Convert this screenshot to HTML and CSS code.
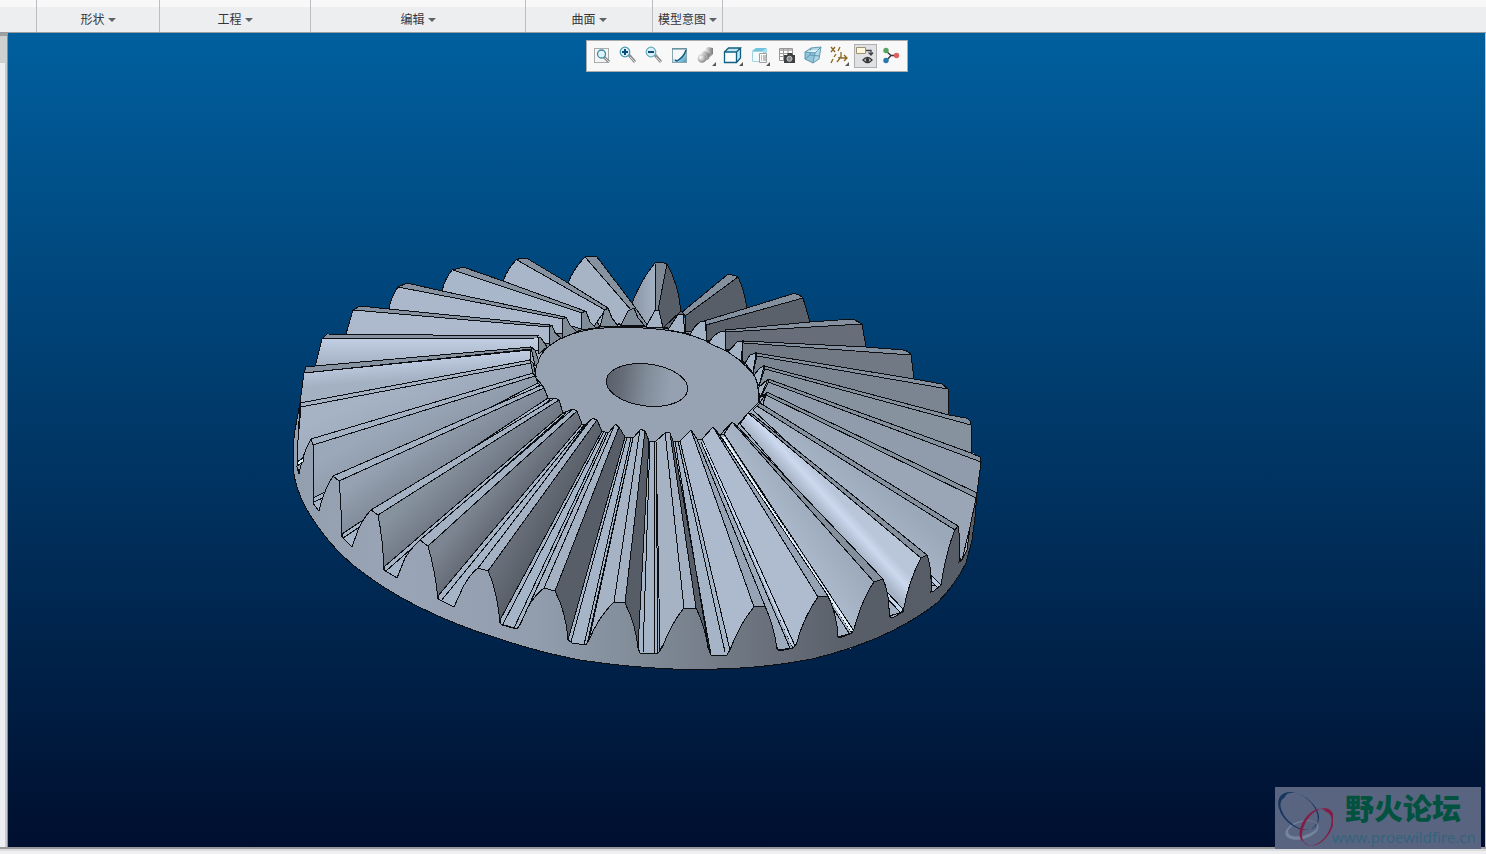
FILE: index.html
```html
<!DOCTYPE html>
<html lang="zh-CN">
<head>
<meta charset="utf-8">
<title>模型</title>
<link rel="stylesheet" href="styles.css">
</head>
<body>
<div class="app">
  <nav class="ribbon" aria-label="功能区">
    <div class="group group-start"></div>
    <div class="group group-shape"><button type="button">形状<i class="caret"></i></button></div>
    <div class="group group-eng"><button type="button">工程<i class="caret"></i></button></div>
    <div class="group group-edit"><button type="button">编辑<i class="caret"></i></button></div>
    <div class="group group-surface"><button type="button">曲面<i class="caret"></i></button></div>
    <div class="group group-intent"><button type="button">模型意图<i class="caret"></i></button></div>
  </nav>
  <div class="workspace">
    <aside class="tree"><div class="tree-head"></div><div class="tree-body"></div></aside>
    <main class="viewport">
      <div class="toolbar" role="toolbar">
        <button type="button" class="tool" aria-label="重新调整"><svg viewBox="0 0 24 24"><rect x="4.500" y="4.500" width="14" height="14" fill="#f4f6f6" stroke="#a9acac"/><path d="M14 13l5 5" stroke="#8c9093" stroke-width="3"/><path d="M15 14l4 4" stroke="#d8d8d8"/><circle cx="11.500" cy="10" r="4" fill="#dff3fb" stroke="#3c8aa6" stroke-width="1.300"/></svg></button>
        <button type="button" class="tool" aria-label="放大"><svg viewBox="0 0 24 24"><path d="M13 11l6 7" stroke="#8c9093" stroke-width="3"/><path d="M14 13l5 5" stroke="#d8d8d8"/><circle cx="9" cy="8" r="4.800" fill="#d8f0fa" stroke="#4b96b2" stroke-width="1.200"/><path d="M6 8h6M9 5v6" stroke="#064a78" stroke-width="2"/></svg></button>
        <button type="button" class="tool" aria-label="缩小"><svg viewBox="0 0 24 24"><path d="M13 11l6 7" stroke="#8c9093" stroke-width="3"/><path d="M14 13l5 5" stroke="#d8d8d8"/><circle cx="9" cy="8" r="4.800" fill="#d8f0fa" stroke="#6aa8be" stroke-width="1.200"/><path d="M6 8h6" stroke="#064a78" stroke-width="2"/></svg></button>
        <button type="button" class="tool" aria-label="重画"><svg viewBox="0 0 24 24"><defs><linearGradient id="rp" x1="0" y1="0" x2="1" y2="1"><stop offset=".3" stop-color="#e9f7fb"/><stop offset="1" stop-color="#3c9ac0"/></linearGradient></defs><rect x="4.500" y="4.500" width="14" height="14" fill="url(#rp)" stroke="#8ba6b0"/><path d="M5 5h13Q15 13 8 17L5 13z" fill="#f5f8f9"/><path d="M18 6Q16 13 9 17l-2-1" fill="none" stroke="#0b5a80" stroke-width="1.400"/><path d="M4 5h15" stroke="#4d7f93"/></svg></button>
        <button type="button" class="tool drop" aria-label="显示样式"><svg viewBox="0 0 24 24"><defs><radialGradient id="sp" cx=".35" cy=".35" r=".7"><stop stop-color="#fff"/><stop offset="1" stop-color="#858585"/></radialGradient><linearGradient id="cy"><stop stop-color="#f4f4f4"/><stop offset="1" stop-color="#777"/></linearGradient></defs><path d="M11 5l3-2 5 1v6l-3 3-5-2z" fill="url(#cy)"/><path d="M7 8l4-1 5 3-1 5-4 2-4-4z" fill="url(#cy)"/><circle cx="8" cy="14.500" r="4.300" fill="url(#sp)"/><path class="mark" d="M22 18v4h-4z"/></svg></button>
        <button type="button" class="tool drop" aria-label="已保存方向"><svg viewBox="0 0 24 24"><path d="M3.500 8l4-4h12v10l-4 4.500h-12z" fill="#bfe5ef"/><path d="M3.500 8h12v10.500h-12z" fill="#f8fcfd"/><path d="M3.500 8h12v10.500h-12zM3.500 8l4-4h12l-4 4M19.500 4v10l-4 4.500" fill="none" stroke="#116080" stroke-width="1.300"/><path class="mark" d="M22 18v4h-4z"/></svg></button>
        <button type="button" class="tool drop" aria-label="视图管理器"><svg viewBox="0 0 24 24"><path d="M4 7l4-3h11l-4 3z" fill="#70c3dd"/><path d="M15 7l4-3v10h-4z" fill="#a9dbe9"/><path d="M4.500 7.500h11v10h-11z" fill="#f3fbfd" stroke="#a4d4e3"/><path d="M11.500 9.500h7v9h-7z" fill="#fafafa" stroke="#a0a0a0"/><path d="M13 12h1m1 0h3m-5 2h1m1 0h3m-5 2h1m1 0h3" stroke="#888"/><path class="mark" d="M22 18v4h-4z"/></svg></button>
        <button type="button" class="tool" aria-label="捕获视图"><svg viewBox="0 0 24 24"><path d="M4.500 4.500h13v12h-13z" fill="#fff" stroke="#999"/><path d="M5 5h12v2H5z" fill="#bbb"/><path d="M5 9.500h12M5 12.500h12M8.500 5v12M13 5v5" stroke="#999"/><path d="M9 11h3l1-2h4l1 2h2v8H9z" fill="#3c4042"/><circle cx="14.500" cy="14.800" r="2.500" fill="#858b8e" stroke="#ccc"/></svg></button>
        <button type="button" class="tool" aria-label="透视图"><svg viewBox="0 0 24 24"><path d="M4 8l6-4 10-1-2 12-6 4-8-4z" fill="#b3d9e7"/><path d="M4 8l10 1-2 10-8-4z" fill="#92c5da"/><path d="M4 8l6-4 10-1-6 6zM14 9l6-6-2 12-6 4zM4 8v7l5-4 9 1M10 4L9 11M4 15l8 4" fill="none" stroke="#5f9ab3"/><path d="M6 8l5-2h6l-3 2z" fill="#e2f3f8"/></svg></button>
        <button type="button" class="tool drop" aria-label="基准显示"><svg viewBox="0 0 24 24"><g fill="none" stroke="#8b6720" stroke-width="1.300"><path d="M4 3l4 5M8 3L4 8M13 3l-2 4M9 10l-2 3M6 15l-2 4M14 8v5l-4 5M14 14h6M17 11l3 3-3 3M14 13l-3 1"/></g><path class="mark" d="M22 18v4h-4z"/></svg></button>
        <button type="button" class="tool pressed" aria-pressed="true" aria-label="注释显示"><svg viewBox="0 0 24 24"><path d="M3.500 3.500h9v6h-9z" fill="#fff8df" stroke="#9e9271"/><path d="M13 6.500h5V11M15.500 8.500L18 11l2-2.500" fill="none" stroke="#414447" stroke-width="1.300"/><path d="M10 16q4.500-5 9 0-4.500 5-9 0z" fill="#fff" stroke="#333" stroke-width="1.300"/><circle cx="14.500" cy="16" r="2" fill="#333"/></svg></button>
        <button type="button" class="tool" aria-label="旋转中心"><svg viewBox="0 0 24 24"><path d="M7 7l5 4.500L7 17M12 11.500h6" fill="none" stroke="#333" stroke-width="1.300"/><circle cx="7" cy="6.500" r="2.700" fill="#57a461"/><circle cx="17.500" cy="11.500" r="2.700" fill="#db6263"/><circle cx="7" cy="16.500" r="2.700" fill="#2679a8"/></svg></button>
      </div>

      <svg class="gear" viewBox="280 240 720 440" role="img" aria-label="锥齿轮">
        <defs>
          <linearGradient id="bore"><stop stop-color="#5a606a"/><stop offset=".2" stop-color="#666d78"/><stop offset=".5" stop-color="#838e9b"/><stop offset=".8" stop-color="#95a1b1"/></linearGradient>
          <linearGradient id="rim" gradientUnits="userSpaceOnUse" x1="293" y1="0" x2="980" y2="0"><stop stop-color="#939fae"/><stop offset=".15" stop-color="#99a5b6"/><stop offset=".35" stop-color="#929eae"/><stop offset=".55" stop-color="#7c8692"/><stop offset=".7" stop-color="#686f7a"/><stop offset=".82" stop-color="#585e68"/><stop offset="1" stop-color="#575d66"/></linearGradient>
          <linearGradient id="l6" x1="0" y1="0" x2="0" y2="1"><stop stop-color="#c4d0e5"/><stop offset="1" stop-color="#a2afc1"/></linearGradient>
          <linearGradient id="l7" x1="0" y1="0" x2=".3" y2="1"><stop offset=".2" stop-color="#c6d3ea"/><stop offset=".65" stop-color="#a4b1c3"/></linearGradient>
          <linearGradient id="l8" x1="0" y1="0" x2="1" y2="1"><stop offset=".3" stop-color="#a6b3c5"/><stop offset=".7" stop-color="#94a0b0"/></linearGradient>
          <linearGradient id="l9" x1="0" y1="0" x2="1" y2="1"><stop offset=".35" stop-color="#9ba8b9"/><stop offset=".7" stop-color="#818c99"/></linearGradient>
          <linearGradient id="l10" x1="0" y1="0" x2="1" y2="1"><stop offset=".35" stop-color="#96a2b2"/><stop offset=".65" stop-color="#6e7682"/></linearGradient>
          <linearGradient id="l11" x1="0" y1="0" x2="1" y2="1"><stop offset=".38" stop-color="#87929f"/><stop offset=".6" stop-color="#646b76"/></linearGradient>
          <linearGradient id="l12" x1="0" y1="0" x2="1" y2="1"><stop offset=".4" stop-color="#7c8591"/><stop offset=".58" stop-color="#5c626c"/></linearGradient>
          <linearGradient id="l13" x1="0" y1="0" x2="1" y2="1"><stop offset=".4" stop-color="#686f7a"/><stop offset=".56" stop-color="#575d66"/></linearGradient>
          <linearGradient id="r20" x1="1" y1="0" x2="0" y2="1"><stop offset=".44" stop-color="#b9c6da"/><stop offset=".475" stop-color="#cbd8ee"/><stop offset=".53" stop-color="#a6b3c5"/></linearGradient>
          <linearGradient id="r19" x1="1" y1="0" x2="0" y2="1"><stop offset=".4" stop-color="#9daabb"/><stop offset=".6" stop-color="#afbccf"/></linearGradient>
          <linearGradient id="r21" x1="1" y1="0" x2="0" y2="1"><stop offset=".4" stop-color="#9ba8b9"/><stop offset=".6" stop-color="#adbacd"/></linearGradient>
          <linearGradient id="a0"><stop stop-color="#8995a4"/><stop offset="1" stop-color="#a5b2c4"/></linearGradient>
        </defs>

        <path d="M300 403L304 373L530 340L760 340L981 457L977 493L970 550L936 603L850 649L673 667L540 649L417 604L332 542L302 497L295 470V446Z" fill="#a2afc1" stroke="none"/>
        <path d="M540 350L563 320L585 313L608 311L634 310L657 311L682 317L705 324L743 344V365H545Z" fill="#7d8894" stroke="none"/>

        <g class="back-teeth">
          <path d="M632 303Q642 278 655 263L656 310L646 326Z" fill="url(#a0)"/>
          <path d="M667 264Q679 285 681 313L663 328L658 310Z" fill="#585e68"/>
          <path d="M655 263Q661 261 667 264L658 310H656Z" fill="#7e8894"/>
        </g>

        <g class="left-back">
          <path d="M568 283Q574 268 585 257L646 326H600Z" fill="#a7b4c6"/>
          <path class="land-d" d="M585 257Q591 255 597 257L632 303L648 326H645Z"/>
          <path d="M503 281Q508 268 517 259L606 309L592 329Z" fill="#a9b6c9"/>
          <path class="land-d" d="M517 260L520 258L528 259L568 283L608 308L605 310Z"/>
          <path d="M442 291Q445 278 453 269L582 312V329Z" fill="#a9b7ca"/>
          <path class="land-d" d="M453 270L463 267L503 281L585 311L582 313Z"/>
          <path d="M389 309Q391 297 398 287L563 319V334Z" fill="#abb8cb"/>
          <path class="land-d" d="M398 287L407 283L442 291L565 317L563 319Z"/>
          <path d="M346 334L353 310L549 327V344Z" fill="#adbacd"/>
          <path class="land-d" d="M353 310L360 306L389 309L550 325L549 327Z"/>
          <path d="M315 367L322 339L538 337L540 350Z" fill="url(#l6)"/>
          <path class="land-d" d="M322 339L327 334L538 336L537 338Z"/>
          <path d="M300 403L304 373L530 350L531 362Z" fill="url(#l7)"/>
          <path class="land-d" d="M304 373L306 367L315 366L531 347L532 349Z"/>
        </g>

        <g class="right-back">
          <path d="M738 277Q744 289 747 308L700 330L685 332V315Z" fill="#585e68"/>
          <path class="land-r" d="M681 313L727 275Q733 274 738 277L685 316Z"/>
          <path d="M663 328L681 311L685 315L670 329Z" fill="#626974"/>
          <path d="M803 298L810 322L750 340L707 341L706 324Z" fill="#5b616b"/>
          <path class="land-r" d="M704 321L747 308L792 294Q798 293 803 298L706 325Z"/>
          <path d="M862 324L866 347L743 348L726 350L725 331Z" fill="#676e79"/>
          <path class="land-r" d="M725 330L810 322L853 319L862 324L726 332Z"/>
          <path d="M911 355L914 379L756 372L742 361L743 342Z" fill="#717985"/>
          <path class="land-r" d="M743 341L866 347L903 350Q909 351 911 355L744 343Z"/>
          <path d="M948 389L949 415L764 385L753 373L757 355Z" fill="#7b8591"/>
          <path class="land-r" d="M756 353L914 379L942 384L948 389L757 356Z"/>
          <path d="M971 425V453L768 395L759 386L765 368Z" fill="#87929f"/>
          <path class="land-r" d="M764 366L949 415L966 418Q971 420 971 425L765 369Z"/>
          <path d="M981 462L977 493L766 405L761 397L769 381Z" fill="#909cab"/>
          <path class="land-r" d="M768 379L971 453L980 457L981 462L768 382Z"/>
          <path d="M976 498L970 527L962 560L760 415L766 394Z" fill="#9aa6b6"/>
          <path class="land-r" d="M767 392L977 493L976 498L766 395Z"/>
          <path d="M955 530L941 585L753 410L758 405Z" fill="url(#r21)"/>
          <path class="land-r" d="M760 403L958 526L955 530L757 406Z"/>
        </g>

        <g class="front-right">
          <path d="M931 585L941 585L937 592L931 592Z" fill="#a3b1c3"/>
          <path d="M931 575L941 585L938 588L931 581Z" fill="#bccbe0"/>
          <path d="M903 612L740 424L748 413L921 558Z" fill="url(#r20)"/>
          <path class="land-r" d="M751 413L927 555L921 558L748 413Z"/>
          <path d="M889 616L885 590L903 612Z" fill="#a3b1c3"/>
          <path d="M885 590L903 609L901 613L885 596Z" fill="#c6d6ec"/>
          <path d="M854 631L724 434L732 422L874 582Z" fill="url(#r19)"/>
          <path class="land-r" d="M734 423L883 579L874 582L732 422Z"/>
          <path d="M838 637L720 435L724 434L852 633Z" fill="#a3b1c3"/>
          <path class="glint" d="M723 437L852 631"/>
          <path d="M722 438L849 633"/>
          <path d="M795 646L702 439L713 427L818 597Z" fill="#afbcd0"/>
          <path class="land-m" d="M716 430L828 596L818 597L713 427Z"/>
          <path d="M765 606L694 432L697 439L778 650Z" fill="#8b96a5"/>
          <path d="M778 650L697 439L702 439L793 648Z" fill="#9dabbc"/>
          <path class="glint soft" d="M702 442L793 646"/>
          <path d="M701 442L790 648"/>
          <path d="M730 650L680 441L691 430L754 607Z" fill="#adbacd"/>
          <path class="land-m" d="M694 432L765 606L754 607L691 430Z"/>
        </g>

        <g class="front-left">
          <path class="land" d="M300 403L530 360L531 363L301 407Z"/>
          <path d="M301 407L531 363L535 374L313 450L300 474L297 467L298 440Z" fill="url(#l8)"/>
          <path class="land" d="M311 439L533 373L535 376L313 445Z"/>
          <path d="M313 445L535 376L538 383L313 503Z" fill="url(#l9)"/>
          <path class="floor" d="M313 498L538 383L540 385L319 511L313 503Z"/>
          <path d="M314 502L325 497"/>
          <path class="land" d="M333 476L542 385L544 388L339 481Z"/>
          <path d="M339 481L544 388L548 398L342 537Z" fill="url(#l10)"/>
          <path class="floor" d="M342 534L548 398L550 400L352 547L342 537Z"/>
          <path d="M343 538L364 524"/>
          <path class="land" d="M371 510L555 398L559 400L378 515Z"/>
          <path d="M378 515L559 400L563 413L384 570Z" fill="url(#l11)"/>
          <path class="floor" d="M384 567L563 413L566 413L397 578L384 570Z"/>
          <path d="M386 571L566 413"/>
          <path class="land" d="M420 540L573 409L577 411L428 546Z"/>
          <path d="M428 546L577 411L582 424L438 599Z" fill="url(#l12)"/>
          <path class="floor" d="M438 596L582 424H586L454 607L438 599Z"/>
          <path d="M441 601L585 424"/>
          <path class="land" d="M478 568L592 418L597 420L488 571Z"/>
          <path d="M488 571L597 420L602 431L500 623Z" fill="url(#l13)"/>
          <path class="floor" d="M500 620L602 431L608 433L518 629L501 624Z"/>
          <path d="M503 624L604 431M514 628L606 433"/>
          <path class="side" d="M520 625L608 433L616 424L544 588Z"/>
          <path class="land" d="M544 588L615 424L619 427L555 591Z"/>
          <path d="M555 591L619 427L625 437L568 640Z" fill="#585e68"/>
          <path class="floor" d="M568 640L625 437L633 438L587 645L571 643Z"/>
          <path d="M571 642L627 437M584 645L631 438"/>
          <path class="side" d="M589 640L633 438L641 429L614 602Z"/>
          <path class="land" d="M614 602L640 429L645 431L625 603Z"/>
          <path d="M625 603L645 431L649 440L638 648Z" fill="#575d67"/>
          <path class="floor" d="M638 648L649 440H656L658 653H640Z"/>
          <path d="M643 653L650 440M655 653L654 440"/>
          <path class="side" d="M660 650L656 441L666 432L684 608Z"/>
          <path class="land" d="M684 608L665 432L670 433L696 608Z"/>
          <path d="M696 608L670 433L673 441L711 655Z" fill="#575d67"/>
          <path class="floor" d="M711 655L673 441H680L730 650L727 655Z"/>
          <path d="M709 651L675 441M725 652L678 441"/>
        </g>

        <path class="rim" fill="url(#rim)" d="M300 403L298 440L297 467L299 474L302 460Q305 450 311 439L313 445V503L319 511L321 503Q326 487 333 476L339 481Q341 500 342 537L352 547L358 530Q364 517 371 510L378 515Q383 540 384 570L397 578L405 558Q413 546 420 540L428 546Q435 570 438 599L454 607L463 587Q471 573 478 568L488 571Q497 590 500 623L502 625L517 629L520 625L528 607Q535 595 544 588L555 591Q566 612 568 640L572 643L586 645L589 640Q599 616 614 602L625 603Q636 625 638 648L640 653L658 653L662 648Q672 622 684 608H696Q705 626 708 648L711 655H727L730 650Q740 623 754 607L765 606Q774 626 777 649L780 651L793 648L796 645Q804 616 818 597L828 596Q837 615 838 637H842L852 633L854 629Q863 597 874 582L883 579Q890 595 889 616L892 618L903 612Q909 580 921 558L927 555Q932 567 931 592L934 591L941 585Q947 548 955 530L958 526Q961 541 959 562L962 560L967 550L970 527L976 498L977 493L975 517L972 540L966 563Q955 585 937 603Q913 622 877 638Q845 651 812 659Q776 666 740 668Q707 670 673 669Q626 667 580 660Q538 652 500 639Q457 626 417 606Q383 589 353 565Q330 546 312 518Q296 494 293 468V447L295 430Z"/>
        <path d="M297 462L303 458V462L297 466Z" fill="#dff3fa"/>

        <path class="hub" d="M536 378Q533 360 550 345Q567 333 593 329Q617 326 643 328Q665 329 687 334Q710 341 730 353Q748 366 755 377Q760 390 758 403L753 408L748 413L742 420L737 426L732 422L720 435L713 427L702 439H697L691 430L680 441H673L670 433L666 432L656 441H649L645 431L641 429L633 438L625 437L619 427L616 424L608 433L602 431L597 420L593 418L586 424H582L577 411L573 409L563 413L559 400L555 398L548 398L544 388L542 385Z"/>
        <g class="faces-left">
          <path d="M621 325L628 311L634 308L638 318L645 326Z"/>
          <path d="M600 327L604 311L608 308L612 318L618 326Z"/>
          <path d="M581 330L582 313L586 311L590 322L596 328Z"/>
          <path d="M562 338L563 319L566 317L570 325L577 332Z"/>
          <path d="M549 346V327L552 325L555 333L561 338Z"/>
          <path d="M539 354L538 337L541 338L547 347Z"/>
          <path d="M531 347L535 350L539 362L535 366Z"/>
          <path d="M530 360L533 363L536 376L533 373Z"/>
        </g>
        <g class="faces-right">
          <path d="M646 327L655 310H659L663 328Z"/>
          <path d="M668 330Q674 320 678 315L683 314L685 333Z"/>
          <path d="M690 335Q694 326 700 322L705 321L707 341Z"/>
          <path d="M709 343Q713 335 720 332L725 331L726 351Z"/>
          <path d="M728 352L737 342L743 341L741 361Z"/>
          <path d="M745 363L750 355L756 353L753 373Z"/>
          <path d="M754 375L760 368L764 366L759 386Z"/>
          <path d="M758 388L768 379L760 398Z"/>
          <path d="M759 399L767 392L759 404Z"/>
        </g>
        <path class="pits" d="M618 324L622 325M596 328L600 327M576 332L581 331M663 328H668M685 333L690 335M707 341L710 343M726 350L729 352M741 361L745 363"/>
        <ellipse cx="647" cy="385" rx="41" ry="21" transform="rotate(7 647 385)" fill="url(#bore)"/>
      </svg>

      <div class="watermark">
        <svg class="wm-logo" viewBox="0 0 58 60" aria-hidden="true">
          <g fill-rule="evenodd">
            <path transform="rotate(-15 27 43)" fill="#77849d" d="M10 43a17 9 0 1 0 34 0a17 9 0 1 0-34 0M13 42a15 7 0 1 0 30 0a15 7 0 1 0-30 0"/>
            <path transform="rotate(42 23 24)" fill="#16365f" d="M0 24a23 15 0 1 0 46 0a23 15 0 1 0-46 0M4 23a21 12 0 1 0 41 0a21 12 0 1 0-41 0"/>
            <path transform="rotate(-56 43 40)" fill="#821d46" d="M22 40a21 13 0 1 0 42 0a21 13 0 1 0-42 0M23 38a19 11 0 1 0 37 0a19 11 0 1 0-37 0"/>
          </g>
        </svg>
        <div class="wm-text"><span class="wm-name">野火论坛</span><span class="wm-url">www.proewildfire.cn</span></div>
      </div>
    </main>
    <div class="edge"></div>
  </div>
  <footer class="status"></footer>
</div>
</body>
</html>
```

FILE: styles.css
```css
* { box-sizing: border-box; }
body { margin: 0; font-family: "Liberation Sans", "Noto Sans CJK SC", sans-serif; background: #ededf0; }
button { font: inherit; border: 0; padding: 0; background: none; color: inherit; }
.app { display: flex; flex-direction: column; height: 100vh; overflow: hidden; }

.ribbon { display: flex; height: 33px; flex: none; background: linear-gradient(#f8f8f8 7px, #edeef0 7px); border-bottom: 1px solid #999b9e; }
.group { display: flex; justify-content: center; padding-top: 7px; border-right: 1px solid #babdc2; }
.group button { display: flex; align-items: center; gap: 3px; font-size: 12px; line-height: 24px; color: #34343a; white-space: nowrap; }
.caret { border: 4px solid transparent; border-top-color: #5f6266; border-bottom: 0; }
.group-start { width: 37px; }
.group-shape { width: 123px; }
.group-eng { width: 151px; }
.group-edit { width: 215px; }
.group-surface { width: 127px; }
.group-intent { width: 70px; }

.workspace { display: flex; flex: 1; min-height: 0; }
.tree { display: flex; flex-direction: column; width: 8px; flex: none; border-right: 1px solid #8c8e91; border-top: 3px solid #9d9fa1; background: #cbccce; }
.tree-head { height: 27px; background: #cdcfd1; }
.tree-body { flex: 1; margin-right: 2px; background: #eeeff2; }
.viewport { position: relative; flex: 1; min-width: 0; background: linear-gradient(#005f9e, #000f2f); }
.edge { width: 1px; background: #c5c8cc; }
.status { height: 7px; flex: none; border-top: 2px solid #99999c; background: linear-gradient(#dcdddf 2px, #efeff1 2px); }

.toolbar { position: absolute; top: 7px; left: 50%; transform: translateX(-50%); display: flex; align-items: center; height: 32px; padding: 0 3px 0 2px; background: #f8f8f8; border: 1px solid #a9abad; }
.tool { display: flex; align-items: center; justify-content: center; width: 26px; height: 24px; }
.tool svg { width: 24px; height: 24px; flex: none; fill: none; }
.drop { width: 27px; }
.mark { fill: #555; }
.pressed { background: #dfe1e4; box-shadow: inset 0 0 0 1px #aeb0b3; width: 23px; margin: 0 1px; }

.gear { position: absolute; left: 272px; top: 207px; width: 720px; height: 440px; stroke: #0c0e12; stroke-width: 1; fill: none; shape-rendering: crispEdges; }
.land { fill: #a3b1c3; }
.land-m { fill: #96a3b4; }
.land-d { fill: #8792a0; }
.land-r { fill: #85909e; }
.floor { fill: #a6b4c7; }
.side { fill: #a5b3c5; }
.hub { fill: #97a3b2; }
.faces-left path { fill: #818c99; }
.faces-right path { fill: #a5b3c6; }
.gear .glint { stroke: #e6f0fb; stroke-width: 2; }
.gear .soft { stroke: #c3d2e8; }
.pits { stroke-width: 2; }

.watermark { position: absolute; right: 4px; bottom: -2px; display: flex; width: 206px; height: 62px; background: #596580; }
.wm-logo { width: 58px; height: 60px; flex: none; margin-right: -1px; }
.wm-text { display: flex; flex-direction: column; white-space: nowrap; }
.wm-name { height: 40px; padding-left: 13px; font: 900 29px/40px "Noto Sans CJK SC", sans-serif; color: #03523f; }
.wm-url { height: 20px; font: 15px/20px "Noto Sans", sans-serif; color: #34637c; }
```
